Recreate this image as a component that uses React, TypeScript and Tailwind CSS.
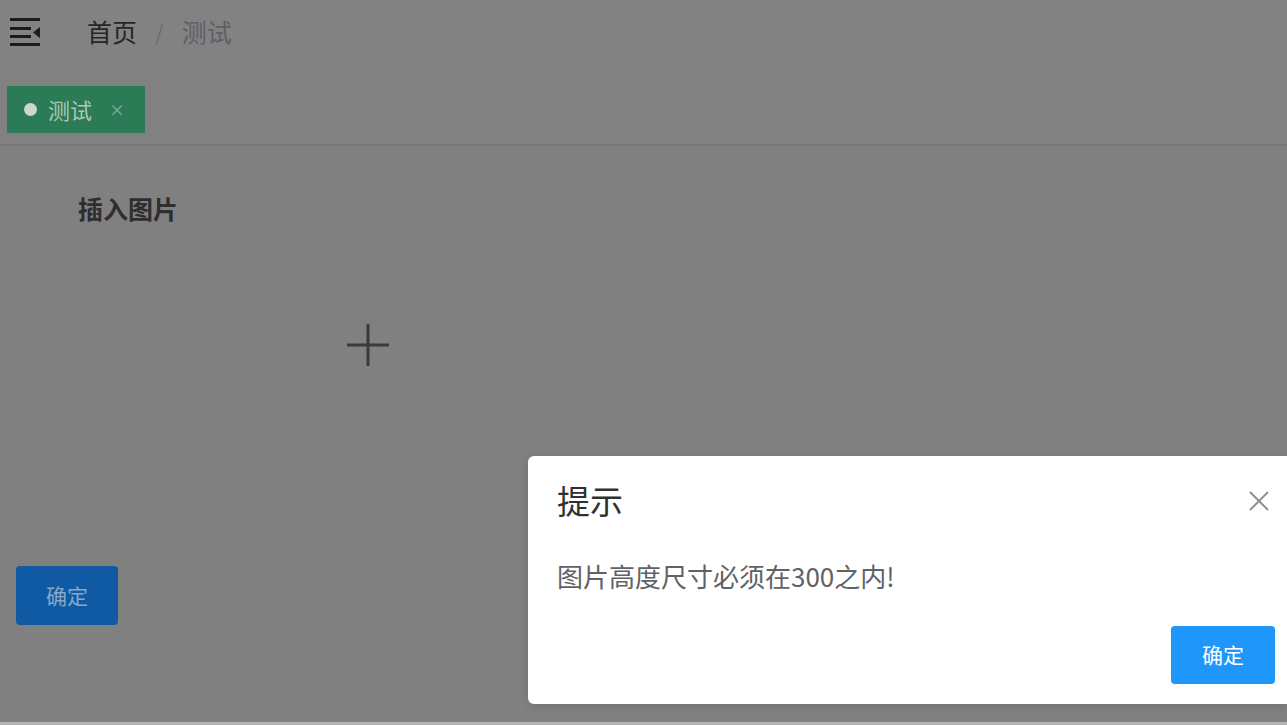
import React from 'react';

const FONT = { fontFamily: '"Noto Sans CJK SC", "Noto Sans", sans-serif' };

const MenuIcon = () => (
  <svg width="32" height="30" viewBox="0 0 32 30" className="block">
    <rect x="0" y="2" width="30" height="3" fill="#1c1c1c" />
    <rect x="0" y="11" width="21" height="3" fill="#1c1c1c" />
    <rect x="0" y="19" width="21" height="3" fill="#1c1c1c" />
    <rect x="0" y="27" width="30" height="3" fill="#1c1c1c" />
    <polygon points="23,16.5 30,11 30,22" fill="#1c1c1c" />
  </svg>
);

const CloseIcon = () => (
  <svg width="22" height="22" viewBox="0 0 22 22" className="block">
    <path d="M2 2 L20 20 M20 2 L2 20" stroke="#8e9196" strokeWidth="2" fill="none" />
  </svg>
);

const PlusIcon = () => (
  <svg width="44" height="44" viewBox="0 0 44 44" className="block">
    <path d="M1 21 H43 M22 0 V42" stroke="#3a3a3a" strokeWidth="3" fill="none" />
  </svg>
);

const App = () => {
  return (
    <div className="relative w-[1287px] h-[725px] overflow-hidden bg-[#808080] flex flex-col" style={FONT}>
      {/* Navbar */}
      <div className="h-[62px] flex items-center pl-[10px] bg-[#828282]">
        <MenuIcon />
        <div className="flex items-center ml-[45px] text-[25px] leading-none">
          <span className="text-[#262626]">首页</span>
          <span className="mx-[18px] text-[#6c6c6c] text-[22px]">/</span>
          <span className="text-[#5c6168]">测试</span>
        </div>
      </div>

      {/* Tags view */}
      <div className="h-[84px] flex items-center pt-[12px] pl-[7px] bg-[#818181] border-b-2 border-[#767676]">
        <div className="h-[47px] w-[138px] flex items-center pl-[17px] bg-[#2a7b56]">
          <span className="w-[13px] h-[13px] rounded-full bg-[#cdd6d1]"></span>
          <span className="ml-[11px] text-[22px] leading-none text-[#a9c9b7]">测试</span>
          <span className="ml-[17px] text-[16px] leading-none text-[#86b39b]">×</span>
        </div>
      </div>

      {/* Form */}
      <div className="flex-1 pl-[16px] pt-[31px]">
        <div className="flex">
          <div className="w-[186px] pr-[24px] pt-[16px] text-right text-[25px] leading-[30px] font-bold text-[#2e2e2e]">
            插入图片
          </div>
          <div className="w-[332px] h-[338px] rounded-[8px] border border-dashed border-[#848484] flex items-center justify-center">
            <PlusIcon />
          </div>
        </div>
        <button className="mt-[51px] w-[102px] h-[59px] rounded-[4px] bg-[#0f5aa3] text-[21px] text-[#88a9c9]">
          确定
        </button>
      </div>
      <div className="h-[3px] bg-[#b4b4b4]"></div>

      {/* Message box */}
      <div className="absolute left-[528px] top-[456px] w-[759px] h-[248px] bg-white rounded-l-[6px] shadow-[0_2px_10px_rgba(0,0,0,0.12)] flex flex-col pl-[29px] pt-[28px] pb-[20px] pr-[12px]">
        <div className="flex items-center justify-between pr-[5px]">
          <span className="text-[33px] leading-[33px] text-[#303133]">提示</span>
          <CloseIcon />
        </div>
        <div className="mt-[43px] text-[26px] leading-[32px] text-[#5f6266]">
          图片高度尺寸必须在300之内!
        </div>
        <div className="flex-1 flex items-end justify-end">
          <button className="w-[104px] h-[58px] rounded-[4px] bg-[#1e96fa] text-white text-[21px]">
            确定
          </button>
        </div>
      </div>
    </div>
  );
};

export default App;
